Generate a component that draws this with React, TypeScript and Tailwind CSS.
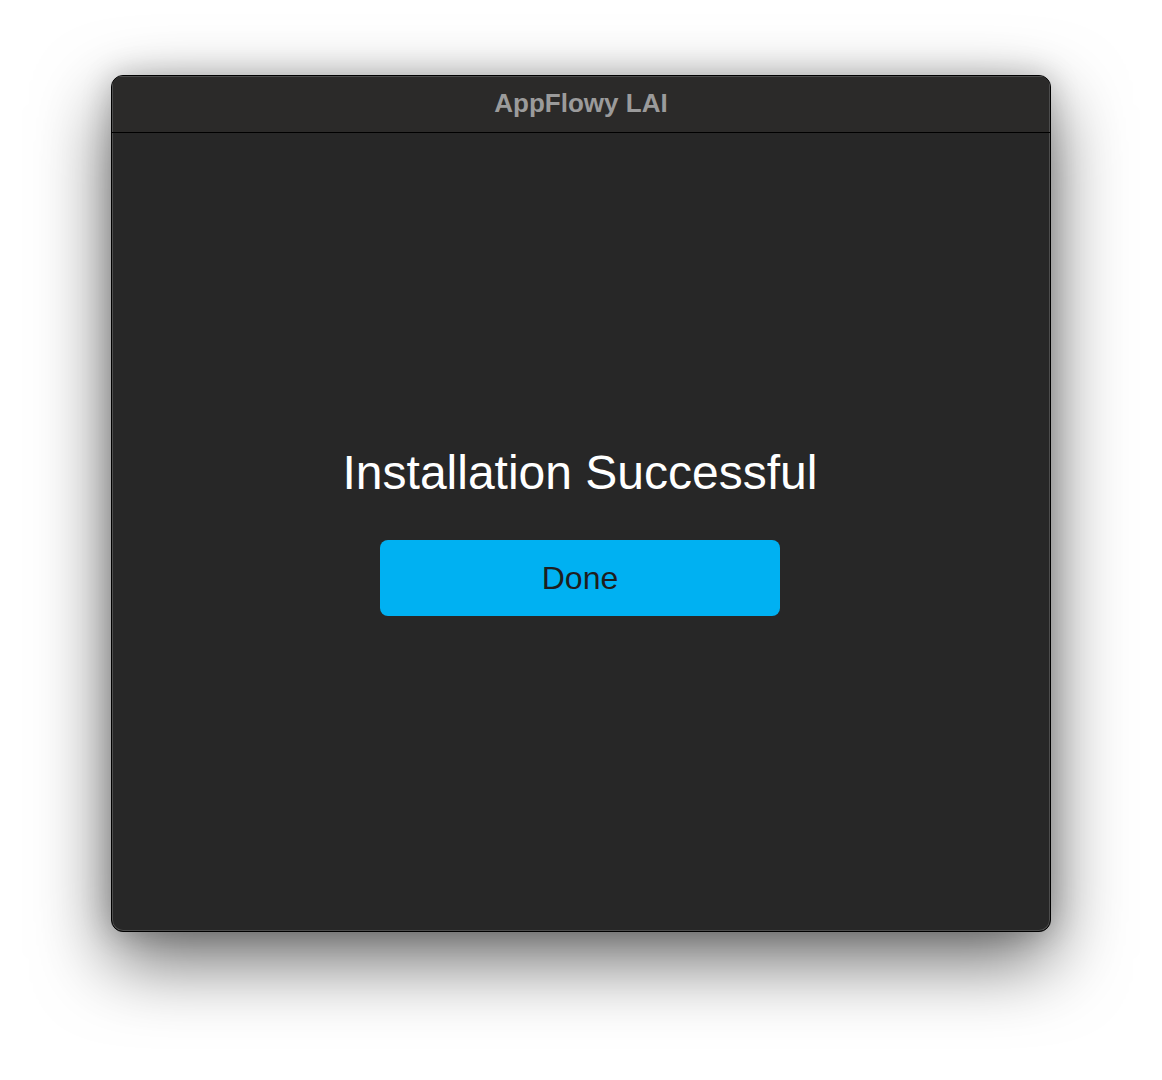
import React from "react";

export default function App() {
  return (
    <div className="w-[1162px] h-[1080px] bg-white pl-[111px] pt-[75px] font-['Liberation_Sans',Arial,sans-serif]">
      <div className="w-[940px] h-[857px] flex flex-col rounded-[12px] border border-black bg-[#272727] overflow-hidden shadow-[inset_0_0_0_1px_#4d4d4d,0_28px_75px_rgba(0,0,0,0.6),0_0_30px_rgba(0,0,0,0.2)]">
        {/* Title bar */}
        <div className="h-[57px] shrink-0 flex items-center justify-center pb-[2px] bg-[#2b2a29] border-b border-black shadow-[inset_1px_1px_0_#4d4d4d,inset_-1px_0_0_#4d4d4d]">
          <span className="text-[26px] font-bold text-[#9b9b9b] leading-none">AppFlowy LAI</span>
        </div>

        {/* Body */}
        <div className="flex-1 flex flex-col items-center justify-center pb-[3px] pr-[2px]">
          <h1 className="h-[56px] leading-[56px] text-[48px] text-white">Installation Successful</h1>
          <button className="mt-[39px] w-[400px] h-[76px] rounded-[8px] bg-[#00b1f2] text-[32px] text-[#1e1e1e]">
            Done
          </button>
        </div>
      </div>
    </div>
  );
}
